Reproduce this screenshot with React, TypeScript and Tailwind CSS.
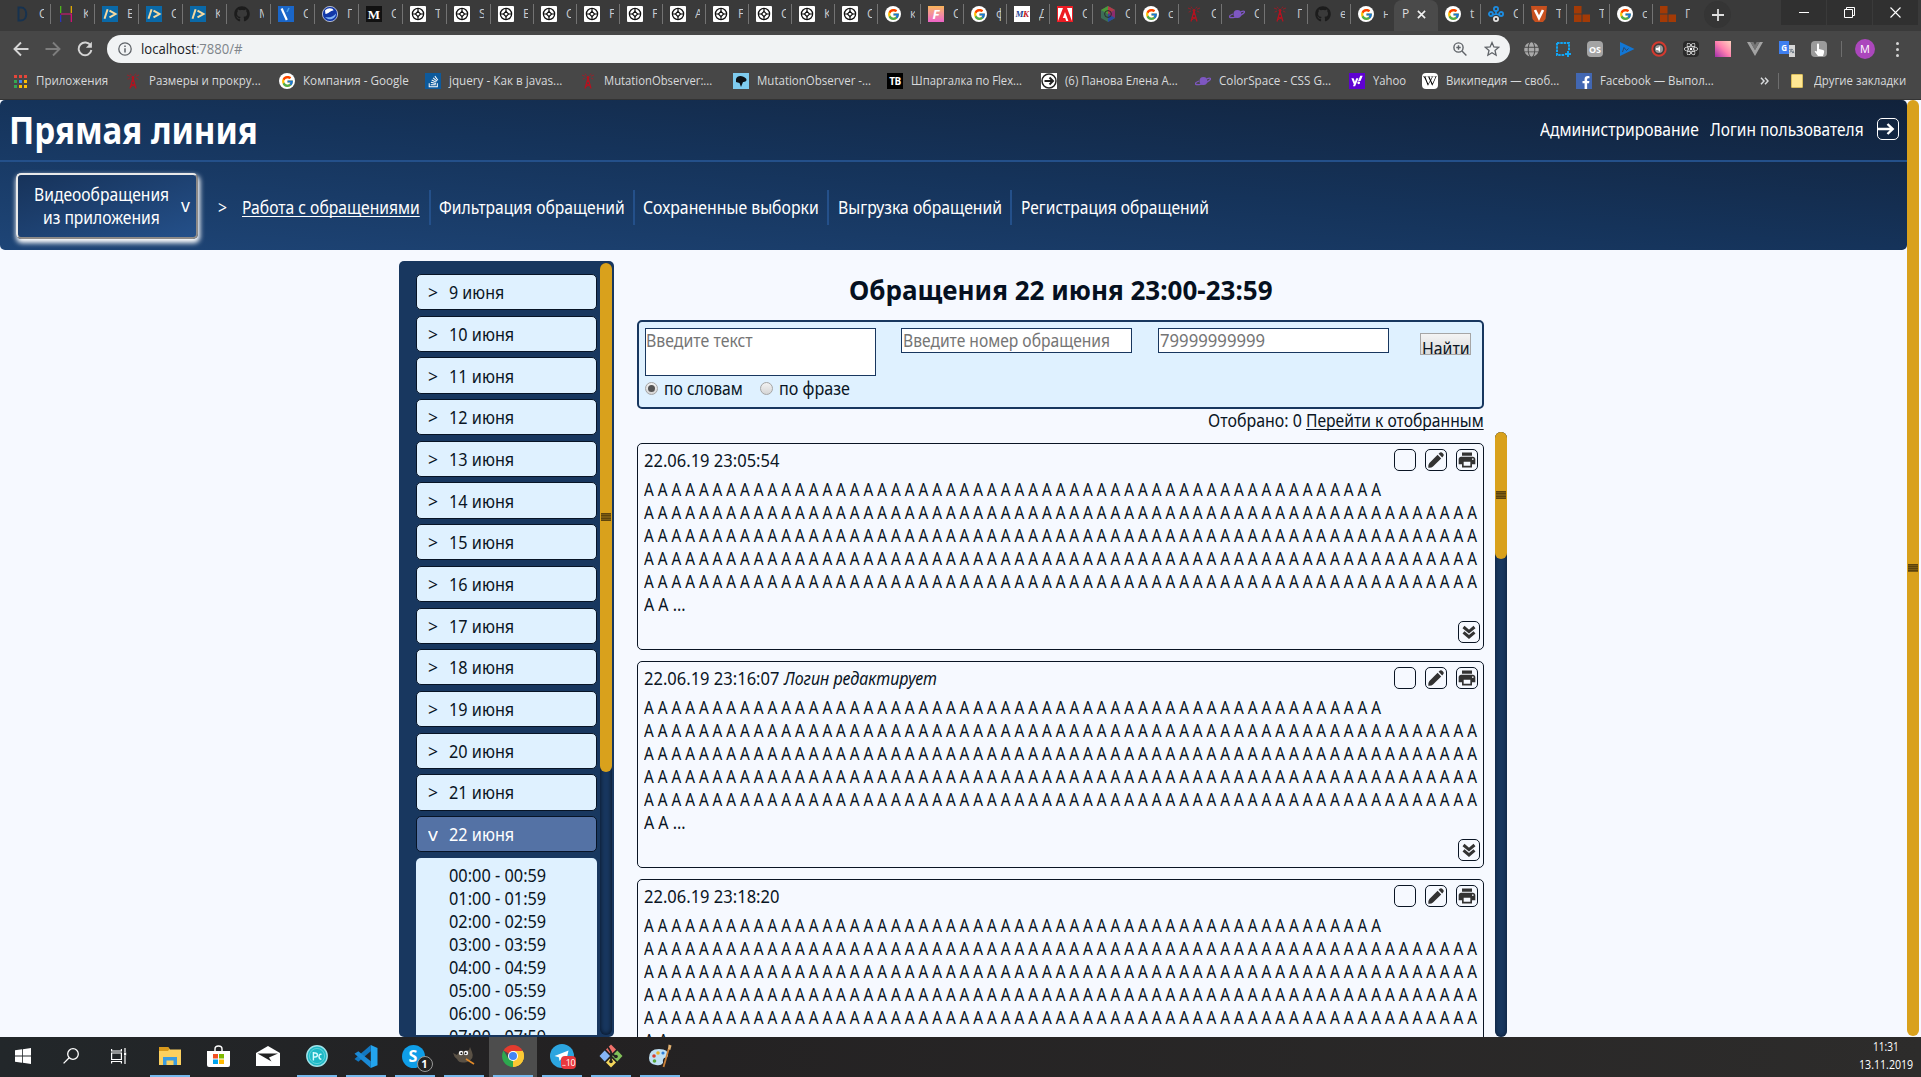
import { useLayoutEffect, useRef, type ReactNode } from "react";
import {
  FaFacebookF,
  FaGithub,
  FaReact,
  FaStackOverflow,
  FaVuejs,
  FaWikipediaW,
  FaYahoo,
  FaGlobe,
} from "react-icons/fa";
import { FcGoogle } from "react-icons/fc";
import { MdPrint, MdTranslate } from "react-icons/md";

type FitProps = { w: number; className?: string; underline?: boolean; children: ReactNode };

/** Condenses or widens one line of text so that it fills exactly `w` pixels. */
function Fit({ w, className = "", underline = false, children }: FitProps) {
  const ref = useRef<HTMLSpanElement>(null);
  useLayoutEffect(() => {
    const el = ref.current;
    if (el) el.style.transform = `scaleX(${w / el.offsetWidth})`;
  }, [w]);
  return (
    <span className={`block shrink-0 text-left ${className}`} style={{ width: w }}>
      <span
        ref={ref}
        className={`inline-block origin-left whitespace-pre align-top ${underline ? "underline decoration-1 underline-offset-2 [text-decoration-skip-ink:none]" : ""}`}
      >
        {children}
      </span>
    </span>
  );
}

/* ---------- favicons ---------- */

const Google = () => (
  <span className="flex h-4 w-4 items-center justify-center rounded-full bg-white">
    <FcGoogle size={13} />
  </span>
);
const Wheel = () => (
  <svg viewBox="0 0 16 16" className="h-4 w-4">
    <rect width="16" height="16" rx="1" fill="#fff" />
    <g fill="none" stroke="#111">
      <circle cx="8" cy="8" r="5.6" strokeWidth="1.3" />
      <path d="M8 5.4L10.6 8L8 10.6L5.4 8Z" strokeWidth="1.2" />
      <path d="M8 2V5.4M8 10.6V14M2 8H5.4M10.6 8H14" strokeWidth="1.2" />
    </g>
  </svg>
);
const Code = () => (
  <svg viewBox="0 0 16 16" className="h-4 w-4">
    <rect width="16" height="16" fill="#0a69a8" />
    <path d="M2.5 12.8L5.6 3.2M7.5 4.6L13.5 8L7.5 11.4" fill="none" stroke="#f6d9a0" strokeWidth="2" />
  </svg>
);
const Tower = () => (
  <svg viewBox="0 0 16 16" className="h-4 w-4" fill="none" stroke="#b5121f">
    <path d="M8 5L5 15.5M8 5L11 15.5M6.8 8.5H9.2M6.4 11L9.6 13M9.6 11L6 13.4" strokeWidth="1.2" />
    <path d="M5 5L2.6 6.2M5 3.2L2 2M6.4 2.6L5 .6M11 5L13.4 6.2M11 3.2L14 2M9.6 2.6L11 .6" strokeWidth=".7" />
    <circle cx="8" cy="4.4" r="1" fill="#b5121f" />
  </svg>
);
const Planet = () => (
  <svg viewBox="0 0 16 16" className="h-4 w-4">
    <circle cx="8.4" cy="8" r="3.9" fill="#7e57c2" />
    <path d="M11.6 5.8C14 5 15.6 5 15.6 5.8C15.6 7.4 10 10.6 5.4 11.4C2 12 .2 11.4 .4 10.4C.5 9.6 2 8.8 4 8" fill="none" stroke="#7e57c2" strokeWidth="1.3" />
  </svg>
);
const Bricks = () => (
  <svg viewBox="0 0 16 16" className="h-4 w-4" fill="#a33a06">
    <path d="M0 0H7.5V7.5H0ZM0 8.5H7.5V16H0ZM8.5 8.5H16V16H8.5Z" />
  </svg>
);
const GitHub = () => <FaGithub size={16} color="#1c1c1c" />;

function Tile({ className, children }: { className: string; children?: ReactNode }) {
  return (
    <span className={`flex h-4 w-4 items-center justify-center overflow-hidden font-bold leading-none ${className}`}>
      {children}
    </span>
  );
}

const DIcon = () => (
  <svg viewBox="0 0 16 16" className="h-4 w-4">
    <path d="M4.5 1.5H7C14 1.5 14 14.5 7 14.5H4.5Z" fill="none" stroke="#17324f" strokeWidth="2" />
  </svg>
);
const HIcon = () => (
  <svg viewBox="0 0 16 16" className="h-4 w-4" strokeWidth="1.2" fill="none">
    <path d="M2.7 0V7" stroke="#4fc31a" />
    <path d="M2.7 9V16" stroke="#2b35c9" />
    <path d="M13.3 0V7" stroke="#f0b400" />
    <path d="M2.7 8H13.3V16" stroke="#e0107a" />
  </svg>
);
const GlobeBall = () => (
  <svg viewBox="0 0 16 16" className="h-4 w-4">
    <circle cx="8" cy="8" r="7.6" fill="#1238a8" stroke="#e8eefc" strokeWidth=".7" />
    <path d="M3 4.5C6 1 11 2 11.5 4.5C9 4 7 7.5 3.5 8Z" fill="#fff" />
    <path d="M3 11C7 12 11 11 14 7.5C14 12 8 16 3 11Z" fill="#7fb2f5" />
  </svg>
);
const Adobe = () => (
  <svg viewBox="0 0 16 16" className="h-4 w-4">
    <rect width="16" height="16" fill="#ed1c24" />
    <path d="M6 2H1V15ZM10 2H15V15ZM8 6L11.4 15H9.2L8.2 12H5.8Z" fill="#fff" />
  </svg>
);
const Cube = () => (
  <svg viewBox="0 0 16 16" className="h-4 w-4">
    <path d="M8 0L15 4V12L8 16L1 12V4Z" fill="#3c6e56" />
    <path d="M8 0L15 4L8 8Z" fill="#b23a4a" />
    <path d="M15 4V12L8 8Z" fill="#8c2b6e" />
    <path d="M8 8L15 12L8 16Z" fill="#2a4ba0" />
    <path d="M1 4L8 0V8Z" fill="#4f9a3a" />
    <circle cx="8" cy="8" r="3.4" fill="none" stroke="#2b2b2b" strokeWidth="1" />
  </svg>
);
const Rings = () => (
  <svg viewBox="0 0 16 16" className="h-4 w-4" fill="none" strokeWidth="1.8">
    <path d="M8 4V8M8 8L4 9M8 8L12 9" stroke="#1d8ce0" />
    <circle cx="8" cy="3" r="2.1" stroke="#1d8ce0" />
    <circle cx="2.9" cy="8" r="2" stroke="#1d8ce0" />
    <circle cx="13.1" cy="8" r="2" stroke="#1d8ce0" />
    <circle cx="8" cy="13" r="2.1" stroke="#e4e4e4" />
  </svg>
);
const VShield = () => (
  <svg viewBox="0 0 16 16" className="h-4 w-4">
    <path d="M0 0H16L14.5 13L12 16H4L1.5 13Z" fill="#c8501e" />
    <path d="M4 4L8 12L12 4" fill="none" stroke="#fff" strokeWidth="2.6" />
  </svg>
);
const VBlue = () => (
  <svg viewBox="0 0 16 16" className="h-4 w-4">
    <rect width="16" height="16" fill="#1a66c8" />
    <path d="M3.6 2.5L8.8 14" stroke="#fff" strokeWidth="2.2" />
    <path d="M9 6L11 2" stroke="#4fa3e6" strokeWidth="1.6" />
  </svg>
);

type Tab = [ReactNode, string];
const tabsWide: Tab[] = [
  [<DIcon />, "С"],
  [<HIcon />, "К"],
  [<Code />, "Е"],
  [<Code />, "С"],
  [<Code />, "К"],
  [<GitHub />, "М"],
  [<VBlue />, "С"],
  [<GlobeBall />, "Г"],
  [<Tile className="bg-[#111] font-['Liberation_Serif'] text-[13px] text-white">M</Tile>, "С"],
  [<Wheel />, "Т"],
  [<Wheel />, "S"],
];
const tabsBefore: Tab[] = [
  [<Wheel />, "Е"],
  [<Wheel />, "С"],
  [<Wheel />, "F"],
  [<Wheel />, "F"],
  [<Wheel />, "А"],
  [<Wheel />, "F"],
  [<Wheel />, "С"],
  [<Wheel />, "К"],
  [<Wheel />, "С"],
  [<Google />, "к"],
  [<Tile className="bg-linear-to-b from-[#f9b455] to-[#ee62c8] text-[13px] italic text-white">F</Tile>, "С"],
  [<Google />, "ф"],
  [<Tile className="bg-white font-['Liberation_Serif'] text-[9px] italic tracking-tighter text-[#1b3f94]">M<span className="text-[#c4161c]">K</span></Tile>, "Д"],
  [<Adobe />, "С"],
  [<Cube />, "С"],
  [<Google />, "с"],
  [<Tower />, "С"],
  [<Planet />, "С"],
  [<Tower />, "Г"],
  [<GitHub />, "е"],
  [<Google />, "н"],
];
const tabsAfter: Tab[] = [
  [<Google />, "t"],
  [<Rings />, "С"],
  [<VShield />, "Т"],
  [<Bricks />, "Т"],
  [<Google />, "с"],
  [<Bricks />, "Г"],
];

function TabItem({ tab, className, line = true }: { tab: Tab; className: string; line?: boolean }) {
  return (
    <div className={`flex h-[31px] shrink-0 items-center pb-[3px] pl-[7px] ${className}`}>
      <span className="flex h-4 w-4 shrink-0 items-center justify-center">{tab[0]}</span>
      <span className="ml-[9px] w-[5px] overflow-hidden text-[12px] leading-4 text-[#c9cbce]">{tab[1]}</span>
      {line && <span className="ml-auto h-5 w-px bg-[#737373]" />}
    </div>
  );
}

function TabStrip() {
  return (
    <div className="flex h-[31px] bg-[#3a3a3a]">
      <div className="flex pl-[7px]">
        {tabsWide.map((t, i) => (
          <TabItem key={i} tab={t} className="w-[44px]" />
        ))}
        {tabsBefore.map((t, i) => (
          <TabItem key={i} tab={t} className="w-[43px]" line={i < 20} />
        ))}
        <div className="flex h-[31px] w-[44px] items-center rounded-t-lg bg-[#4a4a4a] pb-[3px] pl-2 text-[12px] text-[#dcdcdc]">
          <span className="w-[7px] overflow-hidden">P</span>
          <svg viewBox="0 0 10 10" className="ml-2 h-[9px] w-[9px]" stroke="#f1f1f1" strokeWidth="1.8">
            <path d="M1 1L9 9M9 1L1 9" />
          </svg>
        </div>
        {tabsAfter.map((t, i) => (
          <TabItem key={i} tab={t} className="w-[43px]" line={i < 5} />
        ))}
      </div>
      <div className="ml-2 mt-px flex h-[27px] w-[27px] items-center justify-center rounded-full bg-[#353535]">
        <svg viewBox="0 0 12 12" className="h-3 w-3" stroke="#dedede" strokeWidth="1.8">
          <path d="M6 0V12M0 6H12" />
        </svg>
      </div>
      <div className="ml-auto mr-[3px] flex h-[25px] gap-px">
        <div className="flex w-[45px] items-center justify-center bg-[#303030]">
          <span className="h-px w-[10px] bg-white" />
        </div>
        <div className="flex w-[45px] items-center justify-center bg-[#303030]">
          <svg viewBox="0 0 11 11" className="h-[11px] w-[11px]" fill="none" stroke="#fff">
            <path d="M.5 2.5H8.5V10.5H.5ZM2.5 2.5V.5H10.5V8.5H8.5" />
          </svg>
        </div>
        <div className="flex w-[45px] items-center justify-center bg-[#303030]">
          <svg viewBox="0 0 11 11" className="h-[11px] w-[11px]" stroke="#fff" strokeWidth="1.1">
            <path d="M.5 .5L10.5 10.5M10.5 .5L.5 10.5" />
          </svg>
        </div>
      </div>
    </div>
  );
}

function Toolbar() {
  return (
    <div className="flex h-9 items-center">
      <svg viewBox="0 0 16 16" className="ml-[13px] h-4 w-4" fill="none" stroke="#d5d5d5" strokeWidth="1.9">
        <path d="M15.5 8H2M8 1.5L1.5 8L8 14.5" />
      </svg>
      <svg viewBox="0 0 16 16" className="ml-4 h-4 w-4" fill="none" stroke="#7e7e7e" strokeWidth="1.9">
        <path d="M.5 8H14M8 1.5L14.5 8L8 14.5" />
      </svg>
      <svg viewBox="0 0 16 16" className="ml-4 h-4 w-4" fill="none" stroke="#d5d5d5" strokeWidth="1.9">
        <path d="M13.6 4.6A6.4 6.4 0 1 0 14.4 9" />
        <path d="M14.9 .8V6.8H8.9Z" fill="#d5d5d5" stroke="none" />
      </svg>
      <div className="ml-[14px] flex h-7 w-[1403px] items-center rounded-full bg-[#f1f3f4] pl-[11px] pr-[10px]">
        <svg viewBox="0 0 14 14" className="h-[14px] w-[14px]" fill="none" stroke="#5f6368" strokeWidth="1.3">
          <circle cx="7" cy="7" r="6.2" />
          <path d="M7 6.2V10.4M7 3.4V4.9" strokeWidth="1.5" />
        </svg>
        <Fit w={102} className="ml-[9px] text-[14px] leading-5 text-[#202124]">
          localhost<span className="text-[#80868b]">:7880/#</span>
        </Fit>
        <svg viewBox="0 0 14 14" className="ml-auto h-[14px] w-[14px]" fill="none" stroke="#5f6368" strokeWidth="1.4">
          <circle cx="5.5" cy="5.5" r="4.6" />
          <path d="M9 9L13.4 13.4M3.3 5.5H7.7M5.5 3.3V7.7" />
        </svg>
        <svg viewBox="0 0 16 16" className="ml-[17px] h-4 w-4" fill="none" stroke="#5f6368" strokeWidth="1.3">
          <path d="M8 1.6L9.9 6L14.6 6.4L11 9.5L12.1 14.2L8 11.7L3.9 14.2L5 9.5L1.4 6.4L6.1 6Z" />
        </svg>
      </div>
      <div className="ml-[14px] flex items-center gap-4">
        <FaGlobe size={15} color="#aaa" />
        <svg viewBox="0 0 16 16" className="h-4 w-4" fill="none" stroke="#12a5f4" strokeWidth="2">
          <path d="M2 2H14V10M2 2V14H10" strokeDasharray="2.5 .8" />
          <path d="M13 10V16M10 13H16" />
        </svg>
        <Tile className="rounded-sm bg-[#a4a4a4] text-[9px] text-white">OS</Tile>
        <svg viewBox="0 0 16 16" className="h-4 w-4">
          <path d="M1 1L15.5 8L1 15Z" fill="#1277d6" />
          <path d="M3.5 11L5 6.5L7.5 9.5L9.5 7.5" fill="none" stroke="#33415a" strokeWidth=".9" />
        </svg>
        <svg viewBox="0 0 16 16" className="h-4 w-4">
          <circle cx="8" cy="8" r="6.7" fill="#3c3c3c" stroke="#d43a2f" strokeWidth="2" />
          <circle cx="8" cy="8" r="4" fill="#999" />
          <path d="M5 7H7L9 5V11L7 9H5Z" fill="#fff" />
        </svg>
        <Tile className="rounded-sm bg-[#2a2a2a] text-white"><FaReact size={14} /></Tile>
        <Tile className="bg-linear-to-tr from-[#a32aa8] via-[#ff7fae] to-[#ffd2bd]" />
        <svg viewBox="0 0 16 16" className="h-4 w-4">
          <path d="M0 1H3.4L8 9L12.6 1H16L8 15Z" fill="#a3a3a3" />
          <path d="M3.4 1H6.4L8 4L9.6 1H12.6L8 9Z" fill="#777" />
        </svg>
        <span className="flex h-4 w-4 items-start">
          <span className="flex h-[13px] w-[11px] items-center justify-center bg-[#3f7ff0] text-[8px] font-bold text-white">G</span>
          <span className="mt-1 flex h-3 w-[6px] items-center overflow-hidden bg-[#d7d7d7]"><MdTranslate size={8} color="#456" /></span>
        </span>
        <Tile className="rounded-sm bg-[#9b9b9b]">
          <svg viewBox="0 0 16 16" className="h-4 w-4" fill="#fff">
            <path d="M6 3.5C6 2 8 2 8 3.5V8L12 9C14 9.6 13 12 12 15H7L3.6 10.6C4 9.4 5.4 10 6 10.6Z" />
          </svg>
        </Tile>
      </div>
      <span className="ml-[14px] h-4 w-px bg-[#6e6e6e]" />
      <span className="ml-[13px] flex h-5 w-5 items-center justify-center rounded-full bg-[#ab47bc] text-[11px] text-white">М</span>
      <span className="ml-[21px] flex flex-col gap-[3px]">
        <i className="h-[3px] w-[3px] rounded-full bg-[#d5d5d5]" />
        <i className="h-[3px] w-[3px] rounded-full bg-[#d5d5d5]" />
        <i className="h-[3px] w-[3px] rounded-full bg-[#d5d5d5]" />
      </span>
    </div>
  );
}

function Mark({ icon, w, className, children }: { icon: ReactNode; w: number; className: string; children: string }) {
  return (
    <div className={`flex shrink-0 items-center ${className}`}>
      <span className="mr-2 flex h-4 w-4 items-center justify-center">{icon}</span>
      <Fit w={w}>{children}</Fit>
    </div>
  );
}

const appDots = [
  "bg-[#e5463a]", "bg-[#e5463a]", "bg-[#e5463a]",
  "bg-[#34a853]", "bg-[#4285f4]", "bg-[#fbbc05]",
  "bg-[#34a853]", "bg-[#fbbc05]", "bg-[#fbbc05]",
];

function Bookmarks() {
  return (
    <div className="flex h-7 items-center text-[12px] leading-4 text-[#d8dadc]">
      <Mark
        className="ml-3"
        w={72}
        icon={
          <span className="grid grid-cols-3 gap-[2px]">
            {appDots.map((c, i) => (
              <i key={i} className={`h-[3px] w-[3px] ${c}`} />
            ))}
          </span>
        }
      >
        Приложения
      </Mark>
      <Mark className="ml-[17px]" w={112} icon={<Tower />}>Размеры и прокру...</Mark>
      <Mark className="ml-[18px]" w={106} icon={<Google />}>Компания - Google</Mark>
      <Mark className="ml-4" w={113} icon={<Tile className="bg-[#0d5a9c] text-white"><FaStackOverflow size={13} /></Tile>}>jquery - Как в javas...</Mark>
      <Mark className="ml-[18px]" w={108} icon={<Tower />}>MutationObserver:...</Mark>
      <Mark
        className="ml-[21px]"
        w={114}
        icon={
          <Tile className="bg-[#7ecbef]">
            <svg viewBox="0 0 16 16" className="h-4 w-4"><path d="M3 6C4 2 10 2 13 5.5C14.6 8 12 9 10 9L8 14L6.5 10L3 9Z" fill="#0b1116" /></svg>
          </Tile>
        }
      >
        MutationObserver -...
      </Mark>
      <Mark className="ml-4" w={111} icon={<Tile className="bg-black text-[10px] tracking-tighter text-white">TB</Tile>}>Шпаргалка по Flex...</Mark>
      <Mark
        className="ml-[19px]"
        w={113}
        icon={
          <Tile className="bg-white">
            <svg viewBox="0 0 16 16" className="h-4 w-4" fill="none" stroke="#222" strokeWidth="1.5">
              <circle cx="8" cy="8" r="7" />
              <path d="M3.5 8H12M8.5 4.5L12 8L8.5 11.5" strokeWidth="2" />
            </svg>
          </Tile>
        }
      >
        (6) Панова Елена А...
      </Mark>
      <Mark className="ml-[17px]" w={112} icon={<Planet />}>ColorSpace - CSS G...</Mark>
      <Mark className="ml-[18px]" w={33} icon={<Tile className="bg-[#5f01d1] text-white"><FaYahoo size={12} /></Tile>}>Yahoo</Mark>
      <Mark className="ml-4" w={113} icon={<Tile className="rounded-sm bg-white text-black"><FaWikipediaW size={14} /></Tile>}>Википедия — своб...</Mark>
      <Mark className="ml-[17px]" w={114} icon={<Tile className="bg-[#4267b2] pt-[3px] pl-1 text-white"><FaFacebookF size={13} /></Tile>}>Facebook — Выпол...</Mark>
      <svg viewBox="0 0 9 8" className="ml-[46px] h-2 w-[9px]" fill="none" stroke="#d8dadc" strokeWidth="1.5">
        <path d="M1 .7L4 4L1 7.3M5 .7L8 4L5 7.3" />
      </svg>
      <span className="ml-[9px] h-4 w-px bg-[#6e6e6e]" />
      <span className="ml-3 h-[14px] w-3 rounded-[1px] border border-[#d9bd5c] bg-[#ffe793]" />
      <Fit w={92} className="ml-[11px]">Другие закладки</Fit>
    </div>
  );
}

/* ---------- page ---------- */

function Header() {
  return (
    <header className="h-[150px] rounded-[5px] bg-linear-to-tr from-[#1e4577] via-[#15335a] via-50% to-[#11223b] text-[17.5px] leading-[23px] text-white">
      <div className="flex h-[62px] items-center border-b-2 border-[#24508a] pb-[2px]">
        <h1 className="ml-[9px] text-[38px] font-bold leading-[48px]">
          <Fit w={249}>Прямая линия</Fit>
        </h1>
        <Fit w={159} className="ml-auto">Администрирование</Fit>
        <Fit w={154} className="ml-[11px]">Логин пользователя</Fit>
        <span className="ml-[13px] mr-2 flex h-[22px] w-[22px] items-center justify-center rounded-[5px] border border-white">
          <svg viewBox="0 0 20 20" className="h-5 w-5" fill="none" stroke="#fff" strokeWidth="2.4">
            <path d="M0 10H15M9.5 5L14.7 10L9.5 15" />
          </svg>
        </span>
      </div>
      <nav className="flex h-[88px] items-center">
        <button className="ml-4 -mt-[1px] flex h-[66px] w-[182px] items-center rounded-[5px] border-2 border-b-[#8d8a88] border-l-[#e9e9e9] border-r-[#8d8a88] border-t-[#e9e9e9] bg-linear-to-br from-[#17335a] to-[#24508a] pl-4 shadow-[1px_3px_5px_1px_#fff]">
          <span className="flex flex-col items-center">
            <Fit w={135}>Видеообращения</Fit>
            <Fit w={117}>из приложения</Fit>
          </span>
          <Fit w={9} className="ml-[12px]">v</Fit>
        </button>
        <div className="mt-[2px] flex items-center">
          <Fit w={9} className="ml-5">&gt;</Fit>
          <Fit w={178} className="ml-[15px]" underline>Работа с обращениями</Fit>
          <span className="ml-[9px] h-[35px] w-[2px] bg-[#24508a]" />
          <Fit w={186} className="ml-2">Фильтрация обращений</Fit>
          <span className="ml-2 h-[35px] w-[2px] bg-[#24508a]" />
          <Fit w={176} className="ml-2">Сохраненные выборки</Fit>
          <span className="ml-2 h-[35px] w-[2px] bg-[#24508a]" />
          <Fit w={164} className="ml-[9px]">Выгрузка обращений</Fit>
          <span className="ml-2 h-[35px] w-[2px] bg-[#24508a]" />
          <Fit w={188} className="ml-[9px]">Регистрация обращений</Fit>
        </div>
      </nav>
    </header>
  );
}

function Grip() {
  return (
    <span className="-mt-px flex h-2 w-[10px] flex-col justify-between bg-[#7a5a12]">
      <i className="h-px bg-[#5c430c]" />
      <i className="h-px bg-[#5c430c]" />
      <i className="h-px bg-[#5c430c]" />
      <i className="h-px bg-[#5c430c]" />
    </span>
  );
}

const days = ["9", "10", "11", "12", "13", "14", "15", "16", "17", "18", "19", "20", "21"];
const hours = ["00", "01", "02", "03", "04", "05", "06", "07"];

function Sidebar() {
  return (
    <aside className="flex h-[776px] w-[215px] overflow-hidden rounded-[5px] bg-[#18375f] pb-[2px] pt-[2px]">
      <div className="ml-[17px] flex h-[772px] w-[181px] flex-col overflow-hidden pt-[11px] text-[17.5px] text-[#0a1524]">
        {days.map((d) => (
          <div key={d} className="mb-[5.4px] flex h-[36.3px] shrink-0 items-center rounded-[5px] border border-[#071426] bg-[#dff1ff] pl-[11px] pt-px leading-[23px]">
            <Fit w={10}>&gt;</Fit>
            <Fit w={d.length > 1 ? 65 : 55} className="ml-[11px]">{`${d} июня`}</Fit>
          </div>
        ))}
        <div className="mb-[5.4px] flex h-[36.3px] shrink-0 items-center rounded-[5px] border border-[#071426] bg-[#5472a5] pl-[11px] pt-px leading-[23px] text-white">
          <Fit w={10}>v</Fit>
          <Fit w={65} className="ml-[11px]">22 июня</Fit>
        </div>
        <div className="h-[400px] shrink-0 rounded-[5px] bg-[#dff1ff] pl-[33px] pt-[6px] leading-[23px]">
          {hours.map((h) => (
            <Fit key={h} w={97}>{`${h}:00 - ${h}:59`}</Fit>
          ))}
        </div>
      </div>
      <div className="ml-[3px] h-[772px] w-3 rounded-full bg-[#18375f] shadow-[inset_0_0_5px_#050f1e]">
        <div className="flex h-[509px] w-3 items-center justify-center rounded-full bg-[#d9a11c]">
          <Grip />
        </div>
      </div>
    </aside>
  );
}

function Radio({ on = false }: { on?: boolean }) {
  return (
    <span className="flex h-[13px] w-[13px] items-center justify-center rounded-full border border-[#a5a5a5] bg-linear-to-b from-[#f2f2f2] to-[#d6d6d6]">
      {on && <i className="h-[7px] w-[7px] rounded-full bg-[#555]" />}
    </span>
  );
}

function SearchPanel() {
  return (
    <section className="flex h-[89px] items-start rounded-[5px] border-2 border-[#18375f] bg-[#dff1ff] pl-[6px] pt-[6px] leading-[23px] text-[#0a1524]">
      <div className="w-[231px]">
        <div className="h-12 border border-[#18375f] bg-white text-[#757575]">
          <Fit w={107}>Введите текст</Fit>
        </div>
        <div className="flex items-center pt-px">
          <Radio on />
          <Fit w={79} className="ml-[6px]">по словам</Fit>
          <span className="w-[17px]" />
          <Radio />
          <Fit w={71} className="ml-[6px]">по фразе</Fit>
        </div>
      </div>
      <div className="ml-[25px] h-[25px] w-[231px] border border-[#18375f] bg-white pl-px text-[#757575]">
        <Fit w={207}>Введите номер обращения</Fit>
      </div>
      <div className="ml-[26px] h-[25px] w-[231px] border border-[#18375f] bg-white pl-px text-[#757575]">
        <Fit w={105}>79999999999</Fit>
      </div>
      <button className="ml-[31px] mt-[5px] flex h-[22px] w-[51px] items-start overflow-hidden border border-[#a6a6a6] bg-linear-to-b from-[#f4f4f4] to-[#dcdcdc] pl-px pt-[3px]">
        <Fit w={48}>Найти</Fit>
      </button>
    </section>
  );
}

function IconBox({ children }: { children?: ReactNode }) {
  return (
    <span className="flex h-[22px] w-[22px] items-center justify-center rounded-[5px] border border-[#0a1524] text-[#333]">
      {children}
    </span>
  );
}

const shortRow = Array(54).fill("А").join(" ");
const fullRow = Array(61).fill("А").join(" ");

function Card({ time, note }: { time: string; note?: string }) {
  return (
    <article className="mb-[11px] flex h-[207px] shrink-0 flex-col rounded-[5px] border border-[#0a1524] pl-[6px] leading-[23px]">
      <div className="mt-[5px] flex h-[22px] items-center pr-[5px]">
        <Fit w={135} className="pt-px">{time}</Fit>
        {note && <Fit w={153} className="ml-[5px] pt-px italic">{note}</Fit>}
        <div className="ml-auto flex gap-[9px]">
          <IconBox />
          <IconBox>
            <svg viewBox="0 0 18 18" className="h-[18px] w-[18px]" fill="currentColor">
              <path d="M1.3 16.8Q1 13.4 2.4 12L10.6 3.8L14.2 7.4L6 15.6Q4.6 17 1.3 16.8ZM11.6 2.8L13 1.6Q14.2 .8 15.2 1.7L16.4 2.9Q17.2 3.9 16.4 5L15.2 6.4Z" />
            </svg>
          </IconBox>
          <IconBox><MdPrint size={20} className="shrink-0" /></IconBox>
        </div>
      </div>
      <div className="mt-[7px]">
        <Fit w={737}>{shortRow}</Fit>
        <Fit w={833}>{fullRow}</Fit>
        <Fit w={833}>{fullRow}</Fit>
        <Fit w={833}>{fullRow}</Fit>
        <Fit w={833}>{fullRow}</Fit>
        <Fit w={42}>А А ...</Fit>
      </div>
      <div className="mt-[5px] flex justify-end pr-[3px]">
        <IconBox>
          <svg viewBox="0 0 16 16" className="h-4 w-4" fill="none" stroke="currentColor" strokeWidth="3">
            <path d="M2.5 3L8 7.6L13.5 3M2.5 8.4L8 13L13.5 8.4" />
          </svg>
        </IconBox>
      </div>
    </article>
  );
}

function Main() {
  return (
    <main className="w-[847px] text-[17.5px] leading-[23px] text-[#0a1524]">
      <h2 className="flex h-[59px] items-center justify-center pb-px text-[27.5px] font-bold leading-9 text-[#051020]">
        <Fit w={424}>Обращения 22 июня 23:00-23:59</Fit>
      </h2>
      <SearchPanel />
      <div className="flex h-[23px] items-center justify-end gap-1">
        <Fit w={94}>Отобрано: 0</Fit>
        <Fit w={178} underline>Перейти к отобранным</Fit>
      </div>
      <div className="flex h-[605px] flex-col overflow-hidden pt-[11px]">
        <Card time="22.06.19 23:05:54" />
        <Card time="22.06.19 23:16:07" note="Логин редактирует" />
        <Card time="22.06.19 23:18:20" />
      </div>
    </main>
  );
}

function Page() {
  return (
    <div className="flex h-[937px] bg-[#f6f9ff] font-['Noto_Sans',sans-serif]">
      <div className="w-[1907px]">
        <Header />
        <div className="flex pl-[399px] pt-[11px]">
          <Sidebar />
          <div className="w-[23px]" />
          <Main />
          <div className="ml-[11px] mt-[171px] h-[605px] w-3 rounded-full bg-[#18375f] shadow-[inset_0_0_4px_#0a1a30]">
            <div className="flex h-[127px] items-center justify-center rounded-full bg-[#d9a11c]">
              <Grip />
            </div>
          </div>
        </div>
      </div>
      <div className="flex h-[936px] w-3 items-center justify-center rounded-full bg-[#d9a11c]">
        <Grip />
      </div>
    </div>
  );
}

/* ---------- taskbar ---------- */

function Task({ className, children, open = true }: { className: string; children: ReactNode; open?: boolean }) {
  return (
    <div className={`flex h-10 shrink-0 flex-col items-center ${className}`}>
      <div className="flex h-[38px] items-center justify-center">{children}</div>
      {open && <i className="h-[2px] w-10 bg-[#76b9ed]" />}
    </div>
  );
}

function Taskbar() {
  return (
    <footer className="flex h-10 bg-linear-to-r from-[#22272a] via-[#232122] via-30% to-[#2d2c2b] font-['Open_Sans',sans-serif]">
      <Task className="w-[46px]" open={false}>
        <svg viewBox="0 0 16 16" className="h-4 w-4" fill="#fff">
          <path d="M0 2.2L7 1.3V7.6H0ZM7.8 1.2L16 0V7.6H7.8ZM0 8.4H7V14.7L0 13.8ZM7.8 8.4H16V16L7.8 14.8Z" />
        </svg>
      </Task>
      <Task className="w-[50px]" open={false}>
        <svg viewBox="0 0 16 16" className="h-4 w-4" fill="none" stroke="#fff" strokeWidth="1.3">
          <circle cx="10" cy="6" r="5.3" />
          <path d="M6.2 9.8L.6 15.4" />
        </svg>
      </Task>
      <Task className="w-[46px]" open={false}>
        <svg viewBox="0 0 16 16" className="h-4 w-4" fill="none" stroke="#fff" strokeWidth="1.2">
          <path d="M.6 5H10.4V11.5H.6ZM.6 1V3H10.4V1M.6 15.5V13.5H10.4V15.5M14 0V4M14 8V16" />
          <path d="M13 4.5H15.2V7.5H13Z" fill="#fff" stroke="none" />
        </svg>
      </Task>
      <Task className="ml-2 w-10">
        <svg viewBox="0 0 22 20" className="h-5 w-[22px]">
          <path d="M0 1H9L11 3.5H22V19H0Z" fill="#fbd05f" />
          <path d="M0 1H9L10.5 3L9 5H0Z" fill="#d99a1c" />
          <path d="M4 19V11H18V19H14.5V14.5H7.5V19Z" fill="#3a9be0" />
        </svg>
      </Task>
      <Task className="ml-2 w-[41px]" open={false}>
        <svg viewBox="0 0 23 23" className="h-[23px] w-[23px]">
          <path d="M8 6V4Q8 1 11.5 1T15 4V6" fill="none" stroke="#fff" strokeWidth="1.4" />
          <path d="M0 6H23V20Q23 22 21 22H2Q0 22 0 20Z" fill="#fff" />
          <path d="M6 9H11V13.5H6Z" fill="#f25022" />
          <path d="M12 9H17V13.5H12Z" fill="#7fba00" />
          <path d="M6 14.5H11V19H6Z" fill="#00a4ef" />
          <path d="M12 14.5H17V19H12Z" fill="#ffb900" />
        </svg>
      </Task>
      <Task className="ml-2 w-[41px]" open={false}>
        <svg viewBox="0 0 24 20" className="h-5 w-6">
          <path d="M0 7L12 0L24 7V20H0Z" fill="#fff" />
          <path d="M1.5 7.5H22L13 11.5L15.5 15.5L8.5 11.5Z" fill="#222" />
        </svg>
      </Task>
      <Task className="ml-[9px] w-10">
        <svg viewBox="0 0 22 22" className="h-[22px] w-[22px]">
          <circle cx="11" cy="11" r="10.2" fill="#1fb9c6" stroke="#9fe3ea" strokeWidth="1.4" />
          <circle cx="11" cy="11" r="7.6" fill="none" stroke="#6fd8e0" strokeWidth=".8" />
          <path d="M7.4 7V15.4M7.4 8H9Q11.4 8 11.4 10T9 12H7.4M15.6 9.4Q13 8.8 13 11.4T15.4 14.4" fill="none" stroke="#d7fbff" strokeWidth="1.4" />
        </svg>
      </Task>
      <Task className="ml-[9px] w-10">
        <svg viewBox="0 0 24 24" className="h-[23px] w-6">
          <path d="M17 0L24 3V21L17 24Z" fill="#23a4ee" />
          <path d="M17 0V6.5L4 17.5L0 14.5Z" fill="#1277c0" />
          <path d="M0 9L4 6.5L17 17V24Z" fill="#1b8ad6" />
        </svg>
      </Task>
      <Task className="ml-[9px] w-10">
        <span className="relative mr-1 flex h-[23px] w-[23px] items-center justify-center rounded-full bg-[#0f9ee8] text-[16px] font-bold leading-none text-white">
          S
          <span className="absolute left-[15px] top-[11px] flex h-4 w-4 items-center justify-center rounded-full border border-[#999] bg-[#222] text-[11px] text-white">1</span>
        </span>
      </Task>
      <Task className="ml-[9px] w-10">
        <svg viewBox="0 0 24 18" className="h-[18px] w-6">
          <path d="M1 6L5 8Q8 3 12 4L17 3L18 0L20 5Q23 12 15 15Q7 17 5 12Q2 10 1 6Z" fill="#5a5145" />
          <circle cx="9" cy="6" r="2.2" fill="#fff" />
          <circle cx="14" cy="6" r="2.2" fill="#fff" />
          <circle cx="9.4" cy="6.3" r="1" fill="#111" />
          <circle cx="13.6" cy="6.3" r="1" fill="#111" />
          <path d="M14 12L22 17" stroke="#e08a2a" strokeWidth="1.6" />
        </svg>
      </Task>
      <Task className="ml-[5px] w-12 bg-[#4d4d4d]">
        <svg viewBox="0 0 22 22" className="h-[22px] w-[22px]">
          <path d="M11 11L1.5 5.5A11 11 0 0 1 20.5 5.5Z" fill="#e33b2e" />
          <path d="M11 11L20.5 5.5A11 11 0 0 1 11 22Z" fill="#fcc934" />
          <path d="M11 11L11 22A11 11 0 0 1 1.5 5.5L6 13Z" fill="#2da94f" />
          <path d="M11 6H20.8A11 11 0 0 1 11 22L15.5 13Z" fill="#fcc934" />
          <circle cx="11" cy="11" r="5" fill="#fff" />
          <circle cx="11" cy="11" r="4" fill="#4285f4" />
        </svg>
      </Task>
      <Task className="ml-[5px] w-10">
        <span className="relative flex h-6 w-6 items-center justify-center rounded-full bg-[#2ca5e0]">
          <svg viewBox="0 0 24 24" className="h-6 w-6" fill="#fff">
            <path d="M4.5 12L18.5 6.5L16 18L11.5 14.5L9.5 17L8.8 13.3Z" />
          </svg>
          <span className="absolute left-[11px] top-[12px] flex h-[13px] w-[15px] items-center justify-center rounded-sm bg-[#e8383d] text-[9px] tracking-tighter text-white">..10</span>
        </span>
      </Task>
      <Task className="ml-[9px] w-10">
        <svg viewBox="0 0 24 24" className="h-6 w-6">
          <path d="M12 .5L17 5.5L12 10.5L7 5.5Z" fill="#f0706a" />
          <path d="M5.7 6.5L11 12L5.7 17.5L.5 12Z" fill="#86b4f5" />
          <path d="M18.3 6.5L23.5 12L18.3 17.5L13 12Z" fill="#82c05a" />
          <path d="M12 13.5L17 18.5L12 23.5L7 18.5Z" fill="#f5d75c" />
          <path d="M9 3L12 8V18M12 9L17 13" fill="none" stroke="#222" strokeWidth="1.8" />
          <circle cx="12" cy="17.5" r="1.8" fill="#222" />
          <circle cx="17" cy="12.5" r="1.8" fill="#222" />
        </svg>
      </Task>
      <Task className="ml-[9px] w-10">
        <svg viewBox="0 0 24 24" className="h-6 w-6">
          <path d="M1 14Q1 5 11 5Q21 5 20 12Q19 14 16 14Q14 16 15 19Q13 22 8 21Q1 20 1 14Z" fill="#bfe0f4" />
          <circle cx="6" cy="12" r="1.8" fill="#d8402f" />
          <circle cx="10" cy="9" r="1.8" fill="#e7b52c" />
          <circle cx="6.5" cy="17" r="1.8" fill="#58a63c" />
          <circle cx="15" cy="9" r="1.6" fill="#2f7ed8" />
          <path d="M21 4L15.5 23" stroke="#c9813a" strokeWidth="1.8" />
          <path d="M20 5L20.6 .5L23.5 1.5L22.3 6Z" fill="#e0b070" />
        </svg>
      </Task>
      <div className="ml-auto mr-2 flex flex-col items-center text-[12px] leading-[18px] text-white">
        <span className="h-px" />
        <Fit w={26}>11:31</Fit>
        <Fit w={54}>13.11.2019</Fit>
      </div>
    </footer>
  );
}

export default function App() {
  return (
    <div className="flex h-[1077px] w-[1921px] flex-col overflow-hidden bg-white">
      <div className="h-[100px] border-b border-[#333] bg-[#474747] font-['Open_Sans',sans-serif]">
        <TabStrip />
        <Toolbar />
        <Bookmarks />
      </div>
      <Page />
      <Taskbar />
    </div>
  );
}
